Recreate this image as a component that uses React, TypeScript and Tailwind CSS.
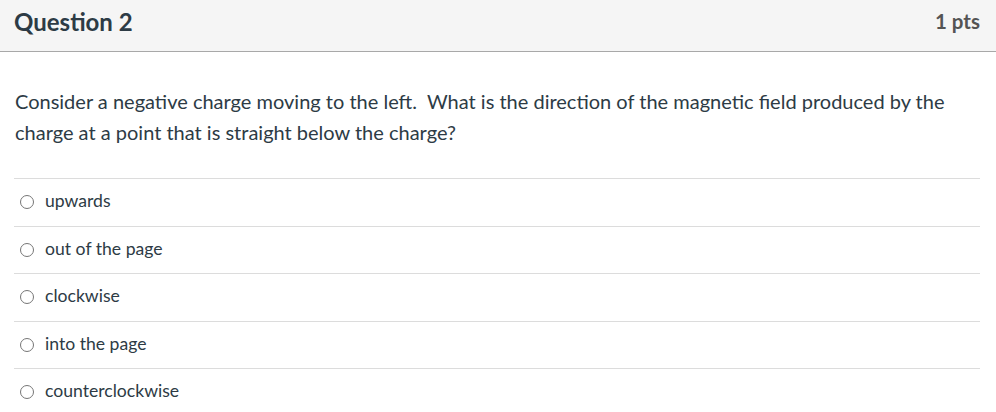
import React from 'react';

const answers = ['upwards', 'out of the page', 'clockwise', 'into the page', 'counterclockwise'];

export default function App() {
  return (
    <div className="w-[996px] h-[412px] bg-white overflow-hidden font-['Lato','Liberation_Sans',sans-serif] text-[#2d3b45]">
      <div className="h-[52px] bg-[#f5f5f5] border-b border-[#a8a8a8] flex items-center justify-between pl-[14px] pr-[16px]">
        <h2 className="text-[24px] font-bold leading-none -mt-[8px]">Question 2</h2>
        <span className="text-[20.5px] font-bold text-[#545454] leading-none -mt-[8px]">1 pts</span>
      </div>

      <div className="pl-[14px] pr-[16px]">
        <p className="mt-[34px] pl-[1px] text-[20px] leading-[31px]">
          Consider a negative charge moving to the left.&nbsp; What is the direction of the magnetic field produced by the charge at a point that is straight below the charge?
        </p>

        <div className="mt-[30px] w-[966px]">
          {answers.map((a) => (
            <label key={a} className="flex items-center h-[47.5px] border-t border-[#dcdcdc] text-[17.6px]">
              <span className="ml-[6px] w-[14px] h-[14px] rounded-full border border-[#767676] bg-white shrink-0" />
              <span className="ml-[11px] -mt-[2px]">{a}</span>
            </label>
          ))}
        </div>
      </div>
    </div>
  );
}
